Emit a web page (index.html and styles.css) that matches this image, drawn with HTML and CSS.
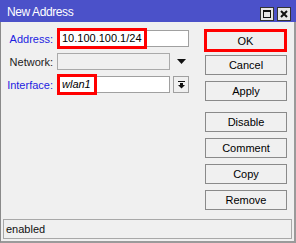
FILE: index.html
```html
<!DOCTYPE html>
<html lang="en">
<head>
    <meta charset="UTF-8">
    <title>New Address</title>
    <link rel="stylesheet" href="styles.css">
</head>
<body>
    <div class="window">
        <div class="titlebar">
            <span class="title">New Address</span>
            <div class="title-btns">
                <span class="tbtn">
                    <svg width="12" height="12" viewBox="0 0 12 12">
                        <rect x="2.5" y="2.5" width="7" height="7" fill="none" stroke="#111" stroke-width="1"/>
                        <rect x="2" y="2" width="8" height="2" fill="#111"/>
                    </svg>
                </span>
                <span class="tbtn">
                    <svg width="12" height="12" viewBox="0 0 12 12">
                        <path d="M3 3 L9 9 M9 3 L3 9" stroke="#111" stroke-width="2"/>
                    </svg>
                </span>
            </div>
        </div>
        <div class="client">
            <div class="main">
                <div class="form">
                    <label class="lbl link">Address:</label>
                    <div class="field">
                        <div class="input">10.100.100.1/24</div>
                        <span class="mark mark-addr"></span>
                    </div>
                    <label class="lbl">Network:</label>
                    <div class="field">
                        <div class="input short disabled"></div>
                        <svg class="tri" width="9" height="5" viewBox="0 0 9 5">
                            <polygon points="0,0 9,0 4.5,5" fill="#111"/>
                        </svg>
                    </div>
                    <label class="lbl link">Interface:</label>
                    <div class="field">
                        <div class="input short"><i>wlan1</i></div>
                        <span class="drop">
                            <svg width="7" height="8" viewBox="0 0 7 8">
                                <rect x="0" y="0" width="7" height="1" fill="#111"/>
                                <rect x="2" y="2" width="3" height="2" fill="#111"/>
                                <polygon points="0,4 7,4 3.5,7.5" fill="#111"/>
                            </svg>
                        </span>
                        <span class="mark mark-iface"></span>
                    </div>
                </div>
                <div class="actions">
                    <button class="btn btn-ok">OK</button>
                    <button class="btn">Cancel</button>
                    <button class="btn">Apply</button>
                    <button class="btn group">Disable</button>
                    <button class="btn">Comment</button>
                    <button class="btn">Copy</button>
                    <button class="btn">Remove</button>
                </div>
            </div>
            <div class="status">enabled</div>
        </div>
    </div>
</body>
</html>
```

FILE: styles.css
```css
body {
    margin: 0;
    font-family: "Liberation Sans", Arial, sans-serif;
    font-size: 11px;
    color: #000;
    background: #f0f0f0;
}
.window {
    width: 296px;
    height: 243px;
    display: flex;
    flex-direction: column;
    background: #f0f0f0;
}
.titlebar {
    height: 22px;
    background: #4b51c9;
    display: flex;
    align-items: center;
    justify-content: space-between;
    padding: 0 5px 0 7px;
    flex-shrink: 0;
}
.title {
    color: #fff;
    font-size: 12px;
    letter-spacing: -0.4px;
    margin-top: 2px;
}
.title-btns {
    display: flex;
    gap: 3px;
    margin-top: 5px;
}
.tbtn {
    width: 14px;
    height: 14px;
    box-sizing: border-box;
    border: 1px solid #333;
    background: #e6e6e6;
    display: flex;
    align-items: center;
    justify-content: center;
}
.client {
    flex: 1;
    display: flex;
    flex-direction: column;
    border-left: 1px solid #8a8a8a;
    border-right: 2px solid #9a9a9a;
    border-bottom: 2px solid #9a9a9a;
}
.main {
    flex: 1;
    display: flex;
    padding-top: 7px;
}
.form {
    display: grid;
    grid-template-columns: 52px 132px;
    grid-auto-rows: 17px;
    column-gap: 4px;
    row-gap: 6px;
    margin-top: 1px;
    align-items: center;
}
.lbl {
    text-align: right;
    color: #222;
}
.lbl.link {
    color: #1d1de0;
}
.field {
    position: relative;
    display: flex;
    align-items: center;
    height: 17px;
}
.input {
    box-sizing: border-box;
    height: 17px;
    width: 132px;
    border: 1px solid #a0a0a0;
    background: #fff;
    padding-left: 4px;
    line-height: 15px;
    white-space: nowrap;
}
.input.short {
    width: 113px;
}
.input.disabled {
    background: #f0f0f0;
    border-color: #aaa;
}
.tri {
    margin-left: 7px;
}
.drop {
    box-sizing: border-box;
    width: 16px;
    height: 17px;
    margin-left: 3px;
    border: 1px solid #a0a0a0;
    background: #f0f0f0;
    display: flex;
    align-items: center;
    justify-content: center;
}
.mark {
    position: absolute;
    left: 0;
    top: -2px;
    height: 21px;
    box-sizing: border-box;
    border: 3px solid #f00;
}
.mark-addr {
    width: 90px;
}
.mark-iface {
    width: 40px;
}
.actions {
    margin-left: 15px;
    width: 83px;
    display: flex;
    flex-direction: column;
}
.btn {
    font-family: inherit;
    font-size: 11px;
    color: #000;
    box-sizing: border-box;
    height: 20px;
    width: 82px;
    margin-left: 1px;
    margin-top: 6px;
    padding: 0;
    border: 1px solid #8a8a8a;
    background: #f0f0f0;
}
.btn-ok {
    width: 83px;
    height: 23px;
    margin: 0;
    border: 3px solid #f00;
}
.btn-ok + .btn {
    margin-top: 3px;
}
.btn.group {
    margin-top: 11px;
}
.status {
    height: 20px;
    box-sizing: border-box;
    margin: 0 2px 2px 2px;
    border: 1px solid #a8a8a8;
    padding-left: 2px;
    line-height: 18px;
    color: #111;
}
```
